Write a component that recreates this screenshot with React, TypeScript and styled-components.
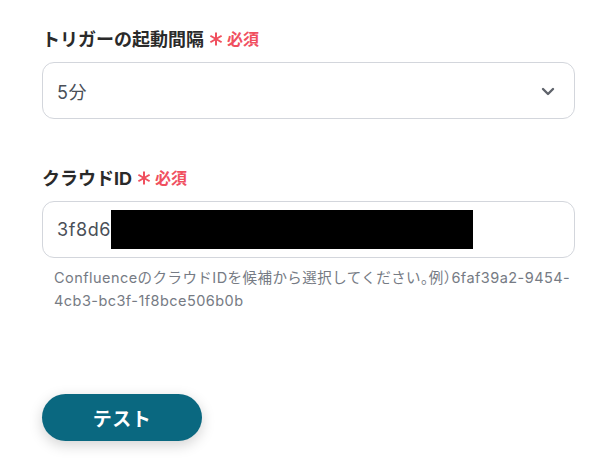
import React from "react";
import styled, { createGlobalStyle } from "styled-components";

const Global = createGlobalStyle`
  html, body { margin: 0; padding: 0; background: #ffffff; }
  body { font-family: Inter, "Noto Sans CJK JP", sans-serif; }
`;

const Page = styled.div`
  width: 606px;
  height: 460px;
  box-sizing: border-box;
  padding: 24px 31px 0 42px;
  display: flex;
  flex-direction: column;
`;

const Field = styled.div<{ $gap?: number }>`
  display: flex;
  flex-direction: column;
  margin-bottom: ${(p) => p.$gap ?? 0}px;
`;

const Label = styled.div`
  display: flex;
  align-items: center;
  height: 28px;
  font-size: 18px;
  font-weight: 700;
  color: #2a2a2a;
  margin-bottom: 10px;
`;

const Required = styled.span`
  display: inline-flex;
  align-items: center;
  margin-left: 5px;
  gap: 4px;
  color: #f0505f;
  font-size: 16px;
  font-weight: 700;
`;

const Star = styled.svg`
  width: 14px;
  height: 14px;
  margin-top: 1px;
`;

const Box = styled.div`
  height: 57px;
  box-sizing: border-box;
  border: 1px solid #d3d6dc;
  border-radius: 12px;
  display: flex;
  align-items: center;
  padding: 0 14px;
  font-size: 18px;
  letter-spacing: 0.6px;
  color: #4a4f57;
  background: #fff;
`;

const Value = styled.span`
  flex: 1;
`;

const Chevron = styled.svg`
  width: 16px;
  height: 16px;
  margin-right: 4px;
`;

const Redact = styled.span`
  display: inline-block;
  width: 362px;
  height: 39px;
  background: #000;
`;

const InputValue = styled.span`
  display: flex;
  align-items: center;
`;

const Help = styled.p`
  margin: 8px 0 0 12px;
  font-size: 14.5px;
  line-height: 23px;
  letter-spacing: 0.45px;
  color: #767b84;
  font-feature-settings: "halt";
`;

const Button = styled.button`
  margin-top: 82px;
  width: 160px;
  height: 47px;
  border: none;
  border-radius: 24px;
  background: #0a6880;
  color: #fff;
  font-family: inherit;
  font-size: 19px;
  font-weight: 700;
  letter-spacing: 0.5px;
  box-shadow: 0 4px 14px rgba(0, 0, 0, 0.18);
  cursor: pointer;
`;

const RequiredMark = () => (
  <Required>
    <Star viewBox="0 0 14 14" fill="none">
      <g stroke="#f0505f" strokeWidth="2" strokeLinecap="butt">
        <path d="M7 0.5v13" />
        <path d="M1.4 3.75l11.2 6.5" />
        <path d="M1.4 10.25l11.2-6.5" />
      </g>
    </Star>
    必須
  </Required>
);

export default function App() {
  return (
    <>
      <Global />
      <Page>
        <Field $gap={44}>
          <Label>
            トリガーの起動間隔
            <RequiredMark />
          </Label>
          <Box>
            <Value>5分</Value>
            <Chevron viewBox="0 0 16 16" fill="none">
              <path d="M3 6l5 5 5-5" stroke="#5f636b" strokeWidth="2.4" strokeLinecap="round" strokeLinejoin="round" />
            </Chevron>
          </Box>
        </Field>
        <Field>
          <Label>
            クラウドID
            <RequiredMark />
          </Label>
          <Box>
            <InputValue>
              3f8d6
              <Redact />
            </InputValue>
          </Box>
          <Help>
            ConfluenceのクラウドIDを候補から選択してください。例）6faf39a2-9454-4cb3-bc3f-1f8bce506b0b
          </Help>
        </Field>
        <div>
          <Button>テスト</Button>
        </div>
      </Page>
    </>
  );
}
